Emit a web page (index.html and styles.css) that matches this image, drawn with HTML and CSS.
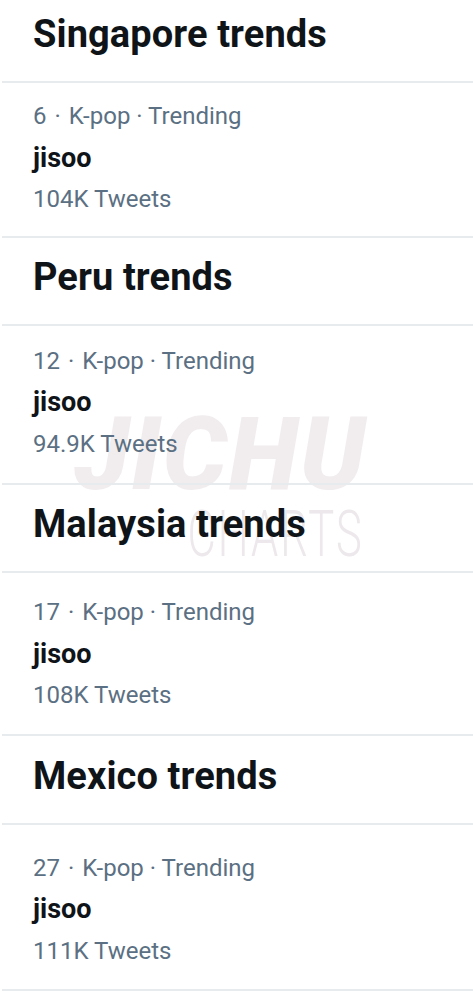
FILE: index.html
```html
<!DOCTYPE html>
<html lang="en">
<head>
<meta charset="utf-8">
<title>Trends</title>
<link rel="stylesheet" href="styles.css">
</head>
<body>
<main class="feed">
  <section class="group">
    <h2 class="title">Singapore trends</h2>
    <div class="trend">
      <div class="meta"><span class="rank">6</span><span class="sep">·</span>K-pop · Trending</div>
      <div class="name">jisoo</div>
      <div class="count">104K Tweets</div>
    </div>
  </section>

  <section class="group">
    <h2 class="title">Peru trends</h2>
    <div class="trend">
      <div class="meta"><span class="rank">12</span><span class="sep">·</span>K-pop · Trending</div>
      <div class="name">jisoo</div>
      <div class="count">94.9K Tweets</div>
    </div>
  </section>

  <section class="group">
    <h2 class="title">Malaysia trends</h2>
    <div class="trend">
      <div class="meta"><span class="rank">17</span><span class="sep">·</span>K-pop · Trending</div>
      <div class="name">jisoo</div>
      <div class="count">108K Tweets</div>
    </div>
  </section>

  <section class="group">
    <h2 class="title">Mexico trends</h2>
    <div class="trend">
      <div class="meta"><span class="rank">27</span><span class="sep">·</span>K-pop · Trending</div>
      <div class="name">jisoo</div>
      <div class="count">111K Tweets</div>
    </div>
  </section>

  <div class="watermark" aria-hidden="true">
    <span class="wm-main">JICHU</span>
    <span class="wm-sub">CHARTS</span>
  </div>
</main>
</body>
</html>
```

FILE: styles.css
```css
html, body {
  margin: 0;
  padding: 0;
  background: #ffffff;
}

body {
  font-family: Roboto, "Noto Sans", "Liberation Sans", sans-serif;
  color: #0f1419;
}

.feed {
  position: relative;
  width: 473px;
  display: flex;
  flex-direction: column;
}

.group {
  position: relative;
  z-index: 1;
  display: flex;
  flex-direction: column;
}

.title {
  margin: 0 0 0 2px;
  padding: 17px 0 25px 31px;
  font-size: 38px;
  line-height: 44px;
  font-weight: 700;
  letter-spacing: 0.1px;
  color: #0f1419;
  border-bottom: 2px solid #e7ebee;
}

.group:nth-of-type(1) .title {
  padding-top: 12px;
}

.group:nth-of-type(4) .title {
  padding-top: 18px;
}

.trend {
  display: flex;
  flex-direction: column;
  margin-left: 2px;
  padding: 14px 0 17px 31px;
  border-bottom: 2px solid #e7ebee;
}

.group:nth-of-type(1) .trend {
  padding-top: 13px;
  padding-bottom: 15px;
}

.group:nth-of-type(2) .trend {
  padding-top: 15px;
  padding-bottom: 18px;
}

.group:nth-of-type(3) .trend {
  padding-top: 19px;
}

.group:nth-of-type(4) .trend {
  padding-top: 23px;
}

.meta,
.count {
  font-size: 24px;
  line-height: 41.5px;
  color: #5b7083;
}

.sep {
  padding: 0 8px 0 8px;
}

.name {
  font-size: 27px;
  line-height: 41.5px;
  font-weight: 700;
  color: #0f1419;
}

.watermark {
  position: absolute;
  left: 36px;
  top: 405px;
  z-index: 0;
  pointer-events: none;
  display: flex;
  flex-direction: column;
  align-items: center;
  color: #f1edef;
}

.wm-main {
  font-size: 101px;
  line-height: 100px;
  font-weight: 900;
  font-style: italic;
  letter-spacing: 2px;
}

.wm-sub {
  font-size: 64px;
  line-height: 60px;
  font-weight: 300;
  letter-spacing: 3px;
  color: #ece8eb;
  transform: scaleX(0.68);
  margin-left: 110px;
}
```
